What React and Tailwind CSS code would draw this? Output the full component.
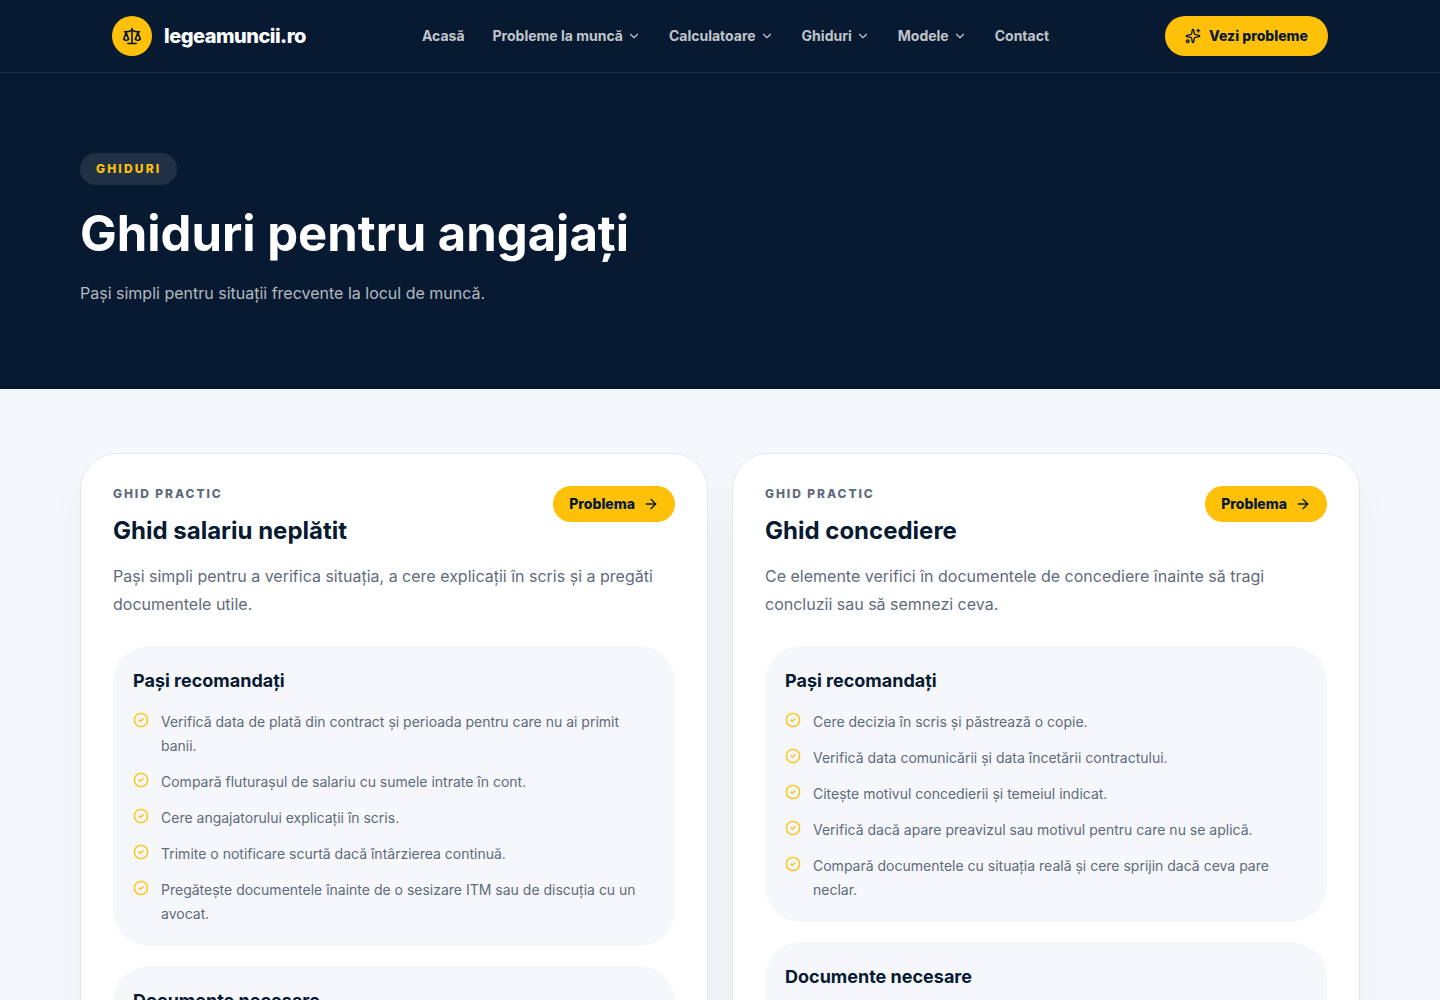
import { ArrowRight, ChevronDown, CircleCheck, Scale, Sparkles } from "lucide-react";

const navItems = [
  { label: "Acasă" },
  { label: "Probleme la muncă", menu: true },
  { label: "Calculatoare", menu: true },
  { label: "Ghiduri", menu: true },
  { label: "Modele", menu: true },
  { label: "Contact" },
];

const guides = [
  {
    title: "Ghid salariu neplătit",
    text: "Pași simpli pentru a verifica situația, a cere explicații în scris și a pregăti documentele utile.",
    steps: [
      "Verifică data de plată din contract și perioada pentru care nu ai primit banii.",
      "Compară fluturașul de salariu cu sumele intrate în cont.",
      "Cere angajatorului explicații în scris.",
      "Trimite o notificare scurtă dacă întârzierea continuă.",
      "Pregătește documentele înainte de o sesizare ITM sau de discuția cu un avocat.",
    ],
  },
  {
    title: "Ghid concediere",
    text: "Ce elemente verifici în documentele de concediere înainte să tragi concluzii sau să semnezi ceva.",
    steps: [
      "Cere decizia în scris și păstrează o copie.",
      "Verifică data comunicării și data încetării contractului.",
      "Citește motivul concedierii și temeiul indicat.",
      "Verifică dacă apare preavizul sau motivul pentru care nu se aplică.",
      "Compară documentele cu situația reală și cere sprijin dacă ceva pare neclar.",
    ],
  },
];

function Header() {
  return (
    <header className="border-b border-white/10 bg-[#071a31]">
      <div className="mx-auto flex h-18 max-w-7xl items-center justify-between px-8">
        <a href="#" className="flex items-center gap-3">
          <span className="flex size-10 items-center justify-center rounded-full bg-[#ffc107] text-[#071a31]">
            <Scale size={20} />
          </span>
          <span className="text-xl font-extrabold tracking-tight text-white">legeamuncii.ro</span>
        </a>
        <nav className="flex items-center gap-7 text-sm font-bold text-white/75">
          {navItems.map((item) =>
            item.menu ? (
              <button key={item.label} type="button" className="flex items-center gap-1">
                {item.label}
                <ChevronDown size={14} />
              </button>
            ) : (
              <a key={item.label} href="#">
                {item.label}
              </a>
            )
          )}
        </nav>
        <a
          href="#"
          className="flex h-10 items-center gap-2 rounded-full bg-[#ffc107] px-5 text-sm font-extrabold text-[#071a31]"
        >
          <Sparkles size={16} />
          Vezi probleme
        </a>
      </div>
    </header>
  );
}

function Hero() {
  return (
    <section className="bg-[#071a31] py-20">
      <div className="mx-auto max-w-7xl">
        <span className="inline-block rounded-full bg-white/10 px-4 py-2 align-top text-xs font-extrabold tracking-[0.18em] text-[#ffc107]">
          GHIDURI
        </span>
        <h1 className="mt-5 text-[49px] leading-[58px] font-bold text-white">Ghiduri pentru angajați</h1>
        <p className="mt-3.5 text-base leading-8 text-white/70">
          Pași simpli pentru situații frecvente la locul de muncă.
        </p>
      </div>
    </section>
  );
}

function GuideCard({ guide }) {
  return (
    <article className="rounded-[36px] border border-slate-200 bg-white p-8 shadow-[0_24px_48px_-8px_rgba(15,23,42,0.05)]">
      <div className="flex items-start justify-between gap-4">
        <div>
          <p className="text-xs leading-4 font-extrabold tracking-[0.16em] text-[#5f6b7c]">GHID PRACTIC</p>
          <h2 className="mt-3 text-2xl leading-[34px] font-bold text-[#071a31]">{guide.title}</h2>
        </div>
        <a
          href="#"
          className="flex h-9 items-center gap-2 rounded-full bg-[#ffc107] px-4 text-sm font-extrabold text-[#071a31]"
        >
          Problema
          <ArrowRight size={16} />
        </a>
      </div>
      <p className="mt-3.5 text-base leading-7 text-[#5f6b7c]">{guide.text}</p>
      <section className="mt-7 rounded-[36px] bg-[#f5f7fb] p-5">
        <h3 className="text-lg leading-[30px] font-bold text-[#071a31]">Pași recomandați</h3>
        <ul className="mt-3.5 space-y-3">
          {guide.steps.map((step) => (
            <li key={step} className="flex gap-3 text-sm leading-6 text-[#5f6b7c]">
              <CircleCheck size={16} className="mt-0.5 shrink-0 text-[#ffc107]" />
              {step}
            </li>
          ))}
        </ul>
      </section>
      <section className="mt-5 rounded-[36px] bg-[#f5f7fb] px-5 pt-5 pb-16">
        <h3 className="text-lg leading-[30px] font-bold text-[#071a31]">Documente necesare</h3>
      </section>
    </article>
  );
}

export default function App() {
  return (
    <div className="min-h-screen bg-[#f5f7fb] font-['Inter',sans-serif]">
      <Header />
      <main>
        <Hero />
        <div className="mx-auto grid max-w-7xl grid-cols-2 gap-6 py-16">
          {guides.map((guide) => (
            <GuideCard key={guide.title} guide={guide} />
          ))}
        </div>
      </main>
    </div>
  );
}
